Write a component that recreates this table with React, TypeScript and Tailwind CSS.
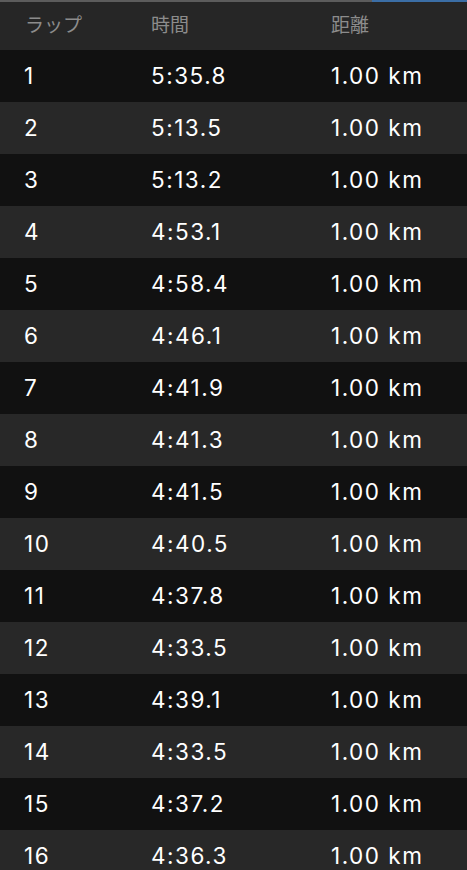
const laps = [
  ["1", "5:35.8"],
  ["2", "5:13.5"],
  ["3", "5:13.2"],
  ["4", "4:53.1"],
  ["5", "4:58.4"],
  ["6", "4:46.1"],
  ["7", "4:41.9"],
  ["8", "4:41.3"],
  ["9", "4:41.5"],
  ["10", "4:40.5"],
  ["11", "4:37.8"],
  ["12", "4:33.5"],
  ["13", "4:39.1"],
  ["14", "4:33.5"],
  ["15", "4:37.2"],
  ["16", "4:36.3"],
];

export default function App() {
  return (
    <div
      className="h-[870px] w-[467px] overflow-hidden bg-[#111111]"
      style={{ fontFamily: 'Inter, "Noto Sans CJK JP", sans-serif' }}
    >
      {/* top divider */}
      <div className="flex h-[2px]">
        <div className="w-[372px] bg-[#5c5c5c]" />
        <div className="flex-1 bg-[#3b6ea6]" />
      </div>

      {/* header */}
      <div className="flex h-[48px] items-center bg-[#262626] text-[19px] text-[#8c8c8c]">
        <div className="w-[151px] pl-[25px]">ラップ</div>
        <div className="w-[180px]">時間</div>
        <div>距離</div>
      </div>

      {laps.map(([n, t], i) => (
        <div
          key={n}
          className={`flex h-[52px] items-center text-[22.5px] tracking-[1.5px] text-white ${
            i % 2 === 0 ? "bg-[#111111]" : "bg-[#282828]"
          }`}
        >
          <div className="w-[151px] pl-[24px]">{n}</div>
          <div className="w-[180px]">{t}</div>
          <div>1.00 km</div>
        </div>
      ))}
    </div>
  );
}
